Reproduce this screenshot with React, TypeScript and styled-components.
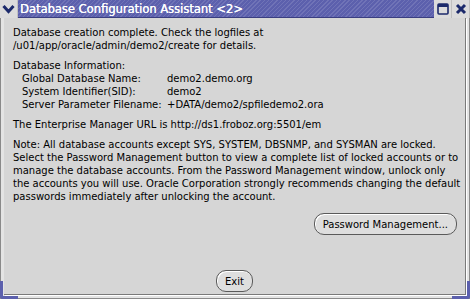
import styled, { createGlobalStyle } from 'styled-components';

const GlobalStyle = createGlobalStyle`
  html, body {
    margin: 0;
    padding: 0;
    background: #d6d6d6;
  }
  body {
    font-family: 'DejaVu Sans', 'Liberation Sans', sans-serif;
  }
`;

const BLUE = '#5c60ad';

const App = () => {
  return (
    <Window>
      <GlobalStyle />
      <TitleBar>
        <TitleButton>
          <svg width="13" height="10" viewBox="0 0 13 10">
            <path d="M1.5 2 L6.5 7.5 L11.5 2" fill="none" stroke="#1c2a6b" strokeWidth="3" />
          </svg>
        </TitleButton>
        <TitleText>Database Configuration Assistant &lt;2&gt;</TitleText>
        <TitleButton>
          <svg width="12" height="12" viewBox="0 0 12 12">
            <rect x="1" y="1" width="10" height="10" rx="1" fill="none" stroke="#1c2a6b" strokeWidth="1.6" />
            <rect x="1" y="1" width="10" height="3" fill="#1c2a6b" />
          </svg>
        </TitleButton>
        <TitleButton>
          <svg width="12" height="12" viewBox="0 0 12 12">
            <path d="M2 2 L10 10 M10 2 L2 10" stroke="#1c2a6b" strokeWidth="3" />
          </svg>
        </TitleButton>
      </TitleBar>
      <Frame>
        <Body>
          <Para>
            Database creation complete. Check the logfiles at
            <br />
            /u01/app/oracle/admin/demo2/create for details.
          </Para>
          <Para>
            Database Information:
            <InfoGrid>
              <span>Global Database Name:</span>
              <span>demo2.demo.org</span>
              <span>System Identifier(SID):</span>
              <span>demo2</span>
              <span>Server Parameter Filename:</span>
              <span>+DATA/demo2/spfiledemo2.ora</span>
            </InfoGrid>
          </Para>
          <Para>The Enterprise Manager URL is http://ds1.froboz.org:5501/em</Para>
          <Para>
            Note: All database accounts except SYS, SYSTEM, DBSNMP, and SYSMAN are locked.
            <br />
            Select the Password Management button to view a complete list of locked accounts or to
            <br />
            manage the database accounts. From the Password Management window, unlock only
            <br />
            the accounts you will use. Oracle Corporation strongly recommends changing the default
            <br />
            passwords immediately after unlocking the account.
          </Para>
          <ButtonRow $align="flex-end" $top={3} $right={8}>
            <PillButton $wide>Password Management...</PillButton>
          </ButtonRow>
          <Spacer />
          <ButtonRow $align="center" $top={0} $right={9}>
            <PillButton>Exit</PillButton>
          </ButtonRow>
        </Body>
        <Corner $side="left" />
        <Corner $side="right" />
      </Frame>
    </Window>
  );
};

const Window = styled.div`
  width: 470px;
  height: 299px;
  display: flex;
  flex-direction: column;
  background: #d6d6d6;
  overflow: hidden;
`;

const TitleBar = styled.div`
  height: 18px;
  display: flex;
  align-items: stretch;
  background: #e6e6e6;
`;

const TitleButton = styled.div`
  width: 17px;
  display: flex;
  align-items: center;
  justify-content: center;
  background: #dcdcdc;
  border-right: 1px solid #c0c0c0;
`;

const TitleText = styled.div`
  flex: 1;
  display: flex;
  align-items: center;
  padding-left: 2px;
  color: #ffffff;
  font-family: 'DejaVu Sans', sans-serif;
  font-size: 11.5px;
  text-shadow: 0.3px 0 0 #ffffff;
  background-color: ${BLUE};
  background-image: repeating-linear-gradient(
    135deg,
    rgba(255, 255, 255, 0.12) 0px,
    rgba(255, 255, 255, 0.12) 1px,
    transparent 1px,
    transparent 3px
  );
  border-bottom: 1px solid #3a3e80;
`;

const Frame = styled.div`
  position: relative;
  flex: 1;
  display: flex;
  border-left: 1px solid #8a8a8a;
  border-right: 1px solid #8a8a8a;
  border-bottom: 1px solid #8a8a8a;
  padding: 0 3px 3px 3px;
  background: #e4e4e4;
`;

const Body = styled.div`
  flex: 1;
  min-width: 0;
  display: flex;
  flex-direction: column;
  background: #d6d6d6;
  border-right: 1px solid #7a7a7a;
  border-bottom: 1px solid #7a7a7a;
  box-shadow: 1px 1px 0 #ffffff;
  padding: 8px 0 2px 9px;
  font-size: 10px;
  line-height: 13px;
  color: #000000;
`;

const Para = styled.div`
  margin-bottom: 7px;
  white-space: nowrap;
`;

const InfoGrid = styled.div`
  display: grid;
  grid-template-columns: 145px auto;
  padding-left: 9px;
`;

const ButtonRow = styled.div<{ $align: string; $top: number; $right: number }>`
  display: flex;
  justify-content: ${({ $align }) => $align};
  margin-top: ${({ $top }) => $top}px;
  padding-right: ${({ $right }) => $right}px;
`;

const Spacer = styled.div`
  flex: 1;
`;

const PillButton = styled.div<{ $wide?: boolean }>`
  height: 20px;
  padding: 0 ${({ $wide }) => ($wide ? 8 : 8)}px;
  display: flex;
  align-items: center;
  border: 1px solid #5a5a5a;
  border-radius: 10px;
  background: #dedede;
  box-shadow: inset 1px 1px 0 #ffffff;
  font-size: 10px;
`;

const Corner = styled.div<{ $side: 'left' | 'right' }>`
  position: absolute;
  bottom: -1px;
  ${({ $side }) => ($side === 'left' ? 'left: -1px;' : 'right: -1px;')}
  width: 18px;
  height: 18px;
  border-bottom: 3px solid ${BLUE};
  ${({ $side }) =>
    $side === 'left'
      ? `border-left: 3px solid ${BLUE}; border-bottom-left-radius: 3px;`
      : `border-right: 3px solid ${BLUE}; border-bottom-right-radius: 3px;`}
  box-sizing: border-box;
`;

export default App;
